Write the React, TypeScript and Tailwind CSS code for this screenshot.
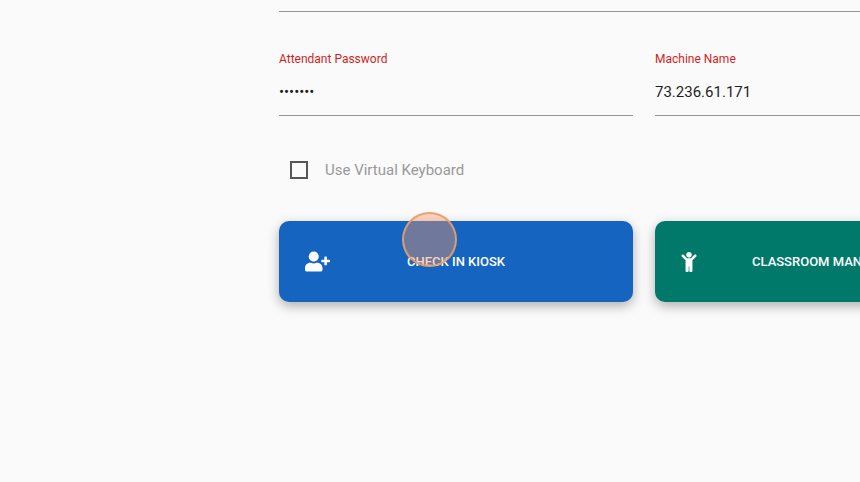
import React, { useState } from 'react';
import { FaChild, FaUserPlus } from 'react-icons/fa';

interface FieldProps {
  id: string;
  label: string;
  type?: string;
  value: string;
  onChange: (value: string) => void;
}

function Field({ id, label, type = 'text', value, onChange }: FieldProps) {
  return (
    <div className="flex flex-col border-b border-[#949494] pb-[11px]">
      <label htmlFor={id} className="text-xs leading-4 text-[#d01f1f]">
        {label}
      </label>
      <input
        id={id}
        type={type}
        value={value}
        onChange={(e) => onChange(e.target.value)}
        className="mt-[13px] h-6 w-full bg-transparent text-[15px] text-[#1f1f1f] outline-none"
      />
    </div>
  );
}

interface TileProps {
  icon: React.ReactNode;
  label: string;
  className: string;
}

function Tile({ icon, label, className }: TileProps) {
  return (
    <button
      type="button"
      className={`grid h-[81px] items-center rounded-[10px] px-6 text-left text-white shadow-[0_4px_12px_rgba(0,0,0,0.3)] ${className}`}
    >
      <span className="flex">{icon}</span>
      <span className="text-[13px] font-medium whitespace-nowrap">{label}</span>
    </button>
  );
}

export default function App() {
  const [password, setPassword] = useState('kiosk12');
  const [machine, setMachine] = useState('73.236.61.171');
  const [keyboard, setKeyboard] = useState(false);

  return (
    <main className="min-h-screen overflow-hidden bg-[#fafafa] pl-[279px] font-['Roboto',sans-serif]">
      <form className="relative min-w-[730px]">
        <div className="h-3 border-b border-[#949494]" />

        <div className="mt-[39px] grid grid-cols-2 gap-x-[22px]">
          <Field id="password" label="Attendant Password" type="password" value={password} onChange={setPassword} />
          <Field id="machine" label="Machine Name" value={machine} onChange={setMachine} />
        </div>

        <label className="mt-10 ml-[11px] flex h-7 w-fit items-center gap-[17px] text-[15px] text-[#999]">
          <input
            type="checkbox"
            checked={keyboard}
            onChange={(e) => setKeyboard(e.target.checked)}
            className="size-[18px] appearance-none border-2 border-[#555] checked:bg-[#1565c0]"
          />
          Use Virtual Keyboard
        </label>

        <div className="mt-[37px] grid grid-cols-2 gap-x-[22px]">
          <Tile
            icon={<FaUserPlus className="ml-[2px] size-[25px]" />}
            label="CHECK IN KIOSK"
            className="grid-cols-[1fr_auto_1fr] bg-[#1565c0]"
          />
          <Tile
            icon={<FaChild className="size-5" />}
            label="CLASSROOM MAN"
            className="grid-cols-[1fr_160px_1fr] bg-[#00796b]"
          />
        </div>

        {/* click marker */}
        <div className="pointer-events-none absolute top-[212px] left-[123px] size-[55px] rounded-full border-2 border-[#e5a06a]/90 bg-[#fa9663]/40" />
      </form>
    </main>
  );
}
